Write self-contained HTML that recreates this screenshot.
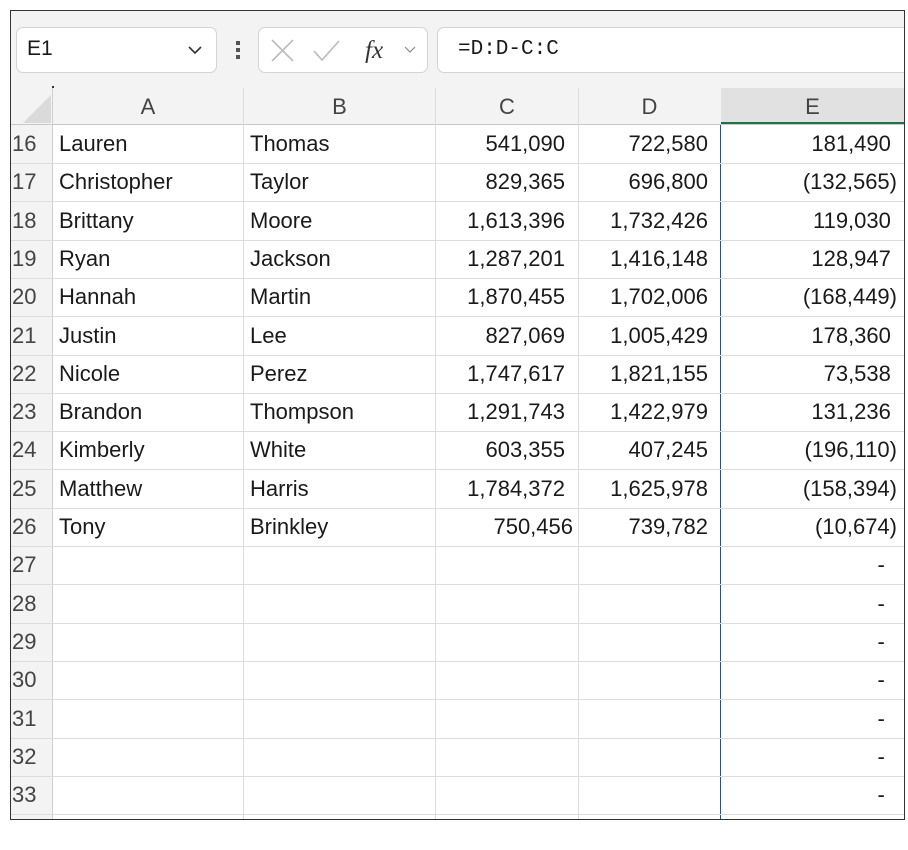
<!DOCTYPE html><html><head><style>
body{margin:0;width:908px;height:850px;background:#fff;position:relative;overflow:hidden;font-family:"Liberation Sans",sans-serif;color:#1a1a1a}
.frame{position:absolute;left:10px;top:10px;width:893px;height:808px;border:1px solid #333;background:#f3f3f3;overflow:hidden}
.box{position:absolute;background:#fff;border:1px solid #d4d4d4;border-radius:7px}
.t{position:absolute;font-size:22px;white-space:nowrap}
.grid{position:absolute;left:0;top:77px;width:893px;height:740px;background:#fff}
.hl{position:absolute;left:0;width:893px;height:1px;background:#dcdcdc}
.vl{position:absolute;top:0;width:1px;height:740px;background:#dcdcdc}
.cell{position:absolute;height:38px;line-height:38px;font-size:22px;white-space:nowrap}
.r{text-align:right}
</style></head><body>
<div class="frame">
<div class="box" style="left:5px;top:16px;width:199px;height:44px"></div>
<div class="t" style="left:16px;top:26px;font-size:21px">E1</div>
<svg style="position:absolute;left:176px;top:33px" width="16" height="12"><path d="M2 3 L8 9 L14 3" stroke="#333" stroke-width="1.6" fill="none"/></svg>
<div style="position:absolute;left:225px;top:30px;width:4px;height:4px;background:#555"></div>
<div style="position:absolute;left:225px;top:37px;width:4px;height:4px;background:#555"></div>
<div style="position:absolute;left:225px;top:44px;width:4px;height:4px;background:#555"></div>
<div class="box" style="left:247px;top:16px;width:168px;height:44px"></div>
<svg style="position:absolute;left:258px;top:26px" width="160" height="26"><path d="M3 3 L24 24 M24 3 L3 24" stroke="#bbb" stroke-width="1.6"/><path d="M45 14 L53 23 L70 4" stroke="#bbb" stroke-width="1.6" fill="none"/><text x="96" y="21" font-family="Liberation Serif" font-style="italic" font-size="25" fill="#333">fx</text><path d="M136 10 L141 15 L146 10" stroke="#888" stroke-width="1.2" fill="none"/></svg>
<div class="box" style="left:426px;top:16px;width:480px;height:44px"></div>
<div class="t" style="left:447px;top:27px;font-size:21px;font-family:'Liberation Mono',monospace">=D:D-C:C</div>
<div class="grid">
<div style="position:absolute;left:0;top:0;width:893px;height:37px;background:#f3f3f3"></div>
<div style="position:absolute;left:710px;top:0;width:183px;height:34px;background:#e1e1e1;border-bottom:3px solid #217346"></div>
<svg style="position:absolute;left:10px;top:5px" width="30" height="30"><path d="M30 2 L30 30 L2 30 Z" fill="#dadada"/></svg>
<div style="position:absolute;left:41px;top:-2px;width:2px;height:2px;background:#333"></div>
<div class="hl" style="top:36px;background:#c8c8c8"></div>
<div style="position:absolute;left:0;top:37px;width:41px;height:703px;background:#f3f3f3"></div>
<div class="vl" style="left:41px;background:#d0d0d0"></div>
<div class="vl" style="left:232px"></div><div class="vl" style="left:424px"></div><div class="vl" style="left:567px"></div><div class="vl" style="left:709px;background:#2b4f8a;top:37px"></div>
<div class="cell" style="left:42px;width:190px;text-align:center;top:0;color:#444">A</div>
<div class="cell" style="left:233px;width:191px;text-align:center;top:0;color:#444">B</div>
<div class="cell" style="left:425px;width:142px;text-align:center;top:0;color:#444">C</div>
<div class="cell" style="left:568px;width:141px;text-align:center;top:0;color:#444">D</div>
<div class="cell" style="left:710px;width:183px;text-align:center;top:0;color:#444">E</div>
<div id="rows"></div>
</div>
</div>
<script>
var d=[["Lauren","Thomas","541,090","722,580","181,490 "],["Christopher","Taylor","829,365","696,800","(132,565)"],["Brittany","Moore","1,613,396","1,732,426","119,030 "],["Ryan","Jackson","1,287,201","1,416,148","128,947 "],["Hannah","Martin","1,870,455","1,702,006","(168,449)"],["Justin","Lee","827,069","1,005,429","178,360 "],["Nicole","Perez","1,747,617","1,821,155","73,538 "],["Brandon","Thompson","1,291,743","1,422,979","131,236 "],["Kimberly","White","603,355","407,245","(196,110)"],["Matthew","Harris","1,784,372","1,625,978","(158,394)"],["Tony","Brinkley","750,456","739,782","(10,674)"]];
var h="";
for(var i=0;i<18;i++){var y=37+i*38.3;var n=16+i;
h+='<div class="cell" style="left:1px;top:'+y+'px;color:#444">'+n+'</div>';
h+='<div class="hl" style="top:'+(y+38)+'px"></div>';
var r=d[i]||["","","","","-&nbsp;&nbsp;"];
h+='<div class="cell" style="left:48px;top:'+y+'px">'+r[0]+'</div>';
h+='<div class="cell" style="left:239px;top:'+y+'px">'+r[1]+'</div>';
h+='<div class="cell r" style="left:425px;width:'+(i==10?137:129)+'px;top:'+y+'px">'+r[2]+'</div>';
h+='<div class="cell r" style="left:568px;width:129px;top:'+y+'px">'+r[3]+'</div>';
h+='<div class="cell r" style="left:710px;width:176px;top:'+y+'px;white-space:pre">'+r[4]+'</div>';}
document.getElementById("rows").innerHTML=h;
</script>
</body></html>
